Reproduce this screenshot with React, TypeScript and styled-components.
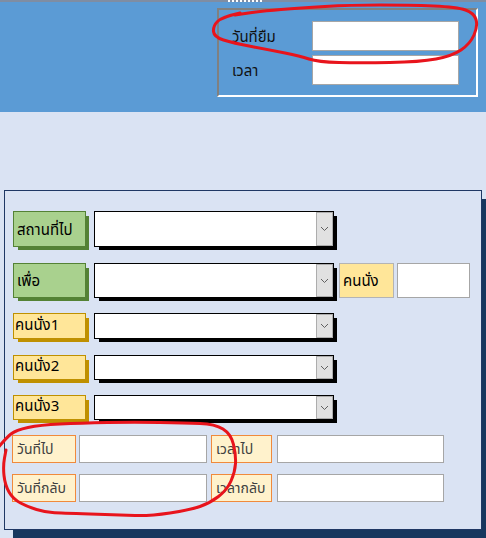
import React from 'react';
import styled, { createGlobalStyle } from 'styled-components';

const thai = `Tahoma, "Noto Sans Thai", "Noto Sans Thai UI", Loma, Garuda, "Noto Sans", "DejaVu Sans", sans-serif`;

const GlobalStyle = createGlobalStyle`
  html, body {
    margin: 0;
    padding: 0;
  }
  body {
    width: 486px;
    height: 538px;
    overflow: hidden;
    background: #dae3f3;
    font-family: ${thai};
  }
`;

type Pt = [number, number];

// smooth a hand-drawn ring through its points (midpoint quadratic curves)
const smooth = (pts: Pt[]): string => {
  let d = `M ${pts[0][0]} ${pts[0][1]}`;
  for (let i = 1; i < pts.length - 1; i++) {
    const [x, y] = pts[i];
    const mx = (x + pts[i + 1][0]) / 2;
    const my = (y + pts[i + 1][1]) / 2;
    d += ` Q ${x} ${y} ${mx} ${my}`;
  }
  const last = pts[pts.length - 1];
  return d + ` L ${last[0]} ${last[1]}`;
};

const markTop: Pt[] = [
  [240, 13], [222, 17], [213, 26], [214, 37], [233, 43], [270, 50], [300, 56],
  [318, 62], [360, 63], [420, 62], [452, 56], [470, 44], [478, 26], [474, 13],
  [457, 7], [410, 5], [350, 5], [300, 8], [262, 11], [235, 15]
];

const markBottom: Pt[] = [
  [-3, 449], [6, 438], [16, 430], [40, 425], [80, 423], [135, 422], [185, 423],
  [215, 424], [231, 434], [236, 455], [235, 472], [227, 490], [210, 503],
  [190, 510], [150, 516], [120, 515], [60, 513], [45, 512], [28, 507],
  [13, 499], [5, 485], [3, 466], [6, 450]
];

export default function App() {
  return (
    <Page>
      <GlobalStyle />
      <TopStrip>
        <Dots />
      </TopStrip>
      <Header>
        <LoanBox>
          <BoxLabel>วันที่ยืม</BoxLabel>
          <BoxInput />
          <BoxLabel>เวลา</BoxLabel>
          <BoxInput />
        </LoanBox>
      </Header>

      <Panel>
        <Row $h={36} $mt={0}>
          <Tag $tone="green">สถานที่ไป</Tag>
          <Combo />
        </Row>
        <Row $h={35} $mt={16}>
          <Tag $tone="green">เพื่อ</Tag>
          <Combo />
          <Flat $w={55} $ml={5} $tone="yellow">คนนั่ง</Flat>
          <Field $w={73} $ml={3} />
        </Row>
        <Row $h={26} $mt={15}>
          <Tag $tone="gold">คนนั่ง1</Tag>
          <Combo />
        </Row>
        <Row $h={25} $mt={16}>
          <Tag $tone="gold">คนนั่ง2</Tag>
          <Combo />
        </Row>
        <Row $h={25} $mt={15}>
          <Tag $tone="gold">คนนั่ง3</Tag>
          <Combo />
        </Row>
        <Row $h={28} $mt={15}>
          <Flat $w={64} $ml={-1} $tone="cream">วันที่ไป</Flat>
          <Field $w={128} $ml={3} />
          <Flat $w={61} $ml={4} $tone="cream">เวลาไป</Flat>
          <Field $w={167} $ml={5} />
        </Row>
        <Row $h={28} $mt={11}>
          <Flat $w={64} $ml={-1} $tone="cream">วันที่กลับ</Flat>
          <Field $w={128} $ml={3} />
          <Flat $w={61} $ml={4} $tone="cream">เวลากลับ</Flat>
          <Field $w={167} $ml={5} />
        </Row>
      </Panel>

      <Marks width="486" height="538" viewBox="0 0 486 538">
        <path d={smooth(markTop)} />
        <path d={smooth(markBottom)} />
      </Marks>
    </Page>
  );
}

const Combo = () => (
  <ComboBox>
    <ComboButton>
      <svg width="9" height="6" viewBox="0 0 9 6">
        <path d="M1 1 L4.5 4.5 L8 1" fill="none" stroke="#606060" strokeWidth="1" />
      </svg>
    </ComboButton>
  </ComboBox>
);

const Page = styled.div`
  position: relative;
  width: 486px;
  height: 538px;
  overflow: hidden;
  background: #dae3f3;
`;

const TopStrip = styled.div`
  height: 2px;
  background: #7f8da3;
  position: relative;
`;

const Dots = styled.div`
  position: absolute;
  left: 228px;
  top: 0;
  width: 34px;
  height: 2px;
  background: repeating-linear-gradient(90deg, #ffffff 0 2px, transparent 2px 4px);
`;

const Header = styled.div`
  height: 110px;
  background: #5b9bd5;
  display: flex;
  justify-content: flex-end;
  align-items: flex-start;
  padding: 6px 8px 0 0;
  box-sizing: border-box;
`;

const LoanBox = styled.div`
  width: 261px;
  height: 89px;
  box-sizing: border-box;
  border-style: solid;
  border-width: 2px;
  border-color: #808080 #ffffff #ffffff #808080;
  display: grid;
  grid-template-columns: 80px 147px;
  grid-auto-rows: 30px;
  row-gap: 4px;
  align-content: start;
  padding: 11px 0 0 13px;
`;

const BoxLabel = styled.div`
  font-size: 15px;
  color: #111;
  display: flex;
  align-items: center;
  padding-top: 2px;
`;

const BoxInput = styled.div`
  background: #ffffff;
  border: 1px solid #a6a6a6;
`;

const Panel = styled.div`
  margin: 78px 0 0 4px;
  width: 478px;
  height: 340px;
  box-sizing: border-box;
  border: 1px solid #1f3864;
  box-shadow: 9px 9px 0 #17375e;
  background: #dae3f3;
  padding: 20px 0 0 8px;
`;

const Row = styled.div<{ $h: number; $mt: number }>`
  display: flex;
  align-items: stretch;
  height: ${p => p.$h}px;
  margin-top: ${p => p.$mt}px;
`;

const tones = {
  green: { bg: '#a9d18e', line: '#548235' },
  gold: { bg: '#ffe699', line: '#bf9000' },
  yellow: { bg: '#ffe699', line: '#bfbfbf' },
  cream: { bg: '#fff2cc', line: '#f4a460' }
};

const Tag = styled.div<{ $tone: 'green' | 'gold' }>`
  width: 73px;
  box-sizing: border-box;
  background: ${p => tones[p.$tone].bg};
  border: 1px solid ${p => tones[p.$tone].line};
  box-shadow: 4px 4px 0 -1px ${p => tones[p.$tone].line};
  font-size: 15px;
  color: #000;
  display: flex;
  align-items: ${p => (p.$tone === 'green' ? 'center' : 'flex-end')};
  padding: ${p => (p.$tone === 'green' ? '2px 0 0 3px' : '0 0 1px 1px')};
  white-space: nowrap;
`;

const Flat = styled.div<{ $w: number; $ml: number; $tone: 'yellow' | 'cream' }>`
  width: ${p => p.$w}px;
  margin-left: ${p => p.$ml}px;
  box-sizing: border-box;
  background: ${p => tones[p.$tone].bg};
  border: 1px solid ${p => (p.$tone === 'cream' ? '#f08a3c' : '#b4b4b4')};
  font-size: ${p => (p.$tone === 'cream' ? 14 : 15)}px;
  color: ${p => (p.$tone === 'cream' ? '#404040' : '#000')};
  display: flex;
  align-items: ${p => (p.$tone === 'cream' ? 'flex-end' : 'center')};
  padding: ${p => (p.$tone === 'cream' ? '0 0 2px 4px' : '2px 0 0 3px')};
  white-space: nowrap;
  overflow: hidden;
`;

const Field = styled.div<{ $w: number; $ml: number }>`
  width: ${p => p.$w}px;
  margin-left: ${p => p.$ml}px;
  box-sizing: border-box;
  background: #ffffff;
  border: 1px solid #a6a6a6;
`;

const ComboBox = styled.div`
  width: 240px;
  margin-left: 8px;
  box-sizing: border-box;
  background: #ffffff;
  border: 1px solid #000000;
  box-shadow: 4px 4px 0 -1px #000000;
  display: flex;
  justify-content: flex-end;
`;

const ComboButton = styled.div`
  width: 17px;
  box-sizing: border-box;
  background: #e1e1e1;
  border: 1px solid #adadad;
  display: flex;
  align-items: center;
  justify-content: center;
`;

const Marks = styled.svg`
  position: absolute;
  left: 0;
  top: 0;
  pointer-events: none;
  fill: none;
  stroke: #e8141c;
  stroke-width: 3;
  stroke-linecap: round;
  stroke-linejoin: round;
`;
